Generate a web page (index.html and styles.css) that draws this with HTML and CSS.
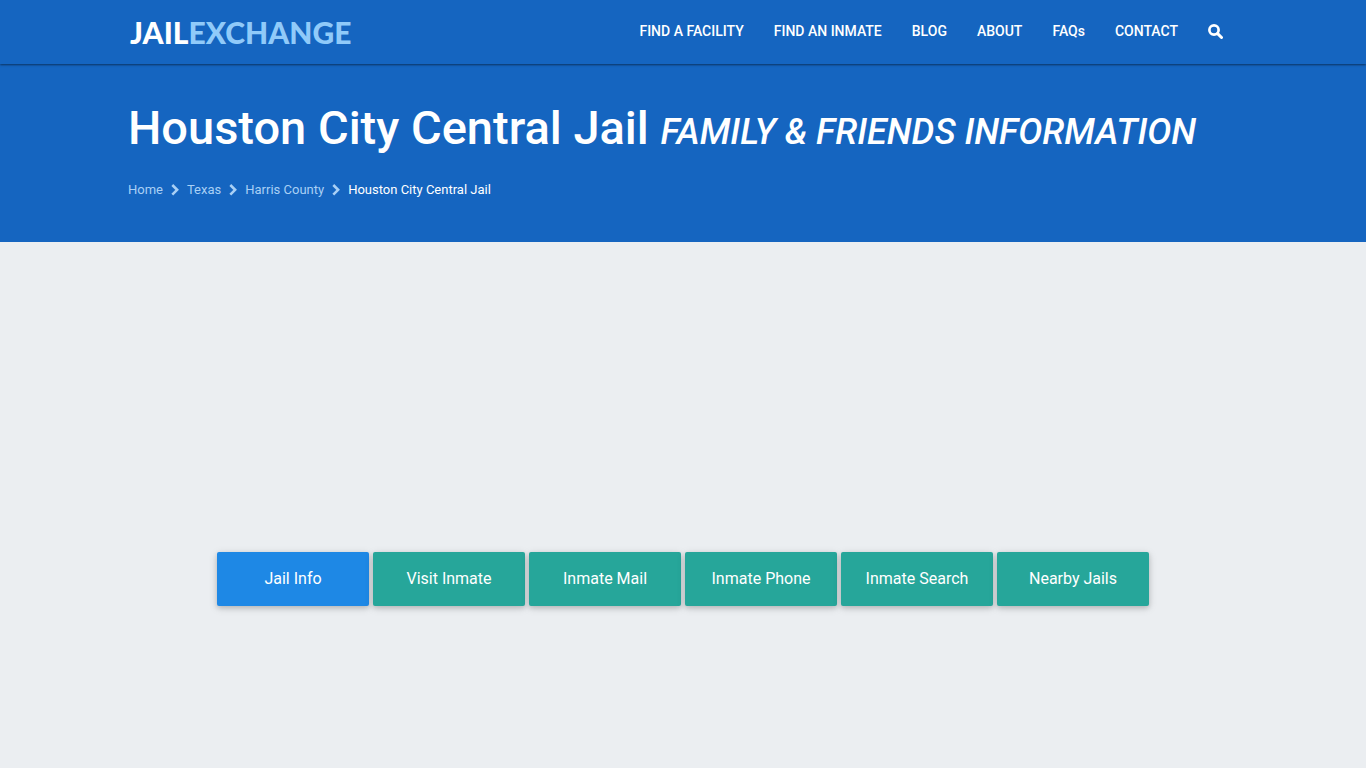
FILE: index.html
```html
<!DOCTYPE html>
<html lang="en">
<head>
	<meta charset="UTF-8">
	<meta name="viewport" content="width=device-width, initial-scale=1">
	<title>Houston City Central Jail</title>
	<link rel="stylesheet" href="styles.css">
</head>
<body>
	<header class="header">
		<div class="container nav-wrap">
			<a href="#" class="logo"><span>JAIL</span>EXCHANGE</a>
			<nav class="nav">
				<a href="#">FIND A FACILITY</a>
				<a href="#">FIND AN INMATE</a>
				<a href="#">BLOG</a>
				<a href="#">ABOUT</a>
				<a href="#">FAQs</a>
				<a href="#">CONTACT</a>
				<a href="#" class="search" aria-label="Search">
					<svg width="15" height="15" viewBox="0 0 14 14" fill="none" stroke="currentColor">
						<circle cx="5.6" cy="5.6" r="4.3" stroke-width="2.5"/>
						<path d="M9 9l3.6 3.6" stroke-width="2.8" stroke-linecap="round"/>
					</svg>
				</a>
			</nav>
		</div>
	</header>
	<div class="banner">
		<div class="container">
			<h1>Houston City Central Jail <em>FAMILY &amp; FRIENDS INFORMATION</em></h1>
			<nav class="crumbs" aria-label="Breadcrumb">
				<a href="#">Home</a>
				<svg class="arrow" viewBox="0 0 8 12"><path d="M1.3 1l4.8 4.8-4.8 4.8"/></svg>
				<a href="#">Texas</a>
				<svg class="arrow" viewBox="0 0 8 12"><path d="M1.3 1l4.8 4.8-4.8 4.8"/></svg>
				<a href="#">Harris County</a>
				<svg class="arrow" viewBox="0 0 8 12"><path d="M1.3 1l4.8 4.8-4.8 4.8"/></svg>
				<a href="#" class="current">Houston City Central Jail</a>
			</nav>
		</div>
	</div>
	<main class="main">
		<div class="tabs">
			<a href="#" class="active">Jail Info</a>
			<a href="#">Visit Inmate</a>
			<a href="#">Inmate Mail</a>
			<a href="#">Inmate Phone</a>
			<a href="#">Inmate Search</a>
			<a href="#">Nearby Jails</a>
		</div>
	</main>
</body>
</html>
```
FILE: styles.css
```css
*{
	box-sizing: border-box;
}
body{
	margin: 0;
	background: #ebeef1;
	font-family: Roboto, "Liberation Sans", sans-serif;
	color: #fff;
}
a{
	color: inherit;
	text-decoration: none;
}
.container{
	max-width: 1110px;
	margin: 0 auto;
}
.header{
	position: relative;
	background: #1565c0;
	box-shadow: 0 1px 2px rgba(0,0,0,.5);
}
.nav-wrap{
	display: flex;
	justify-content: space-between;
	align-items: flex-start;
	min-height: 64px;
}
.logo{
	padding: 12px 0 0 2px;
	font: 900 30px/40px Lato, "Open Sans", sans-serif;
	color: #90caf9;
}
.logo span{
	color: #fff;
}
.nav{
	display: flex;
	flex-wrap: wrap;
	font-size: 14px;
	font-weight: 500;
	line-height: 62px;
}
.nav a{
	padding: 0 15px;
}
.nav svg{
	display: block;
}
.search{
	display: flex;
	align-items: center;
}
.banner{
	background: #1565c0;
	padding: 32px 0 40px;
}
.banner h1{
	margin: 0;
	font-size: 47px;
	font-weight: 500;
	line-height: 64px;
}
.banner h1 em{
	font-size: 36px;
}
.crumbs{
	display: flex;
	flex-wrap: wrap;
	align-items: center;
	gap: 8px;
	margin-top: 14px;
	font-size: 13px;
	line-height: 24px;
	color: #a9d0f5;
}
.crumbs .current{
	color: #fff;
}
.arrow{
	width: 8px;
	height: 12px;
	fill: none;
	stroke: #a9d0f5;
	stroke-width: 2.6;
}
.main{
	padding: 310px 16px 160px;
}
.tabs{
	display: flex;
	flex-wrap: wrap;
	justify-content: center;
	gap: 4px;
}
.tabs a{
	width: 152px;
	background: #26a69a;
	border-radius: 2px;
	box-shadow: 0 2px 5px rgba(0,0,0,.16), 0 2px 10px rgba(0,0,0,.12);
	font-size: 16px;
	line-height: 54px;
	text-align: center;
}
.tabs .active{
	background: #1e88e5;
}
```
